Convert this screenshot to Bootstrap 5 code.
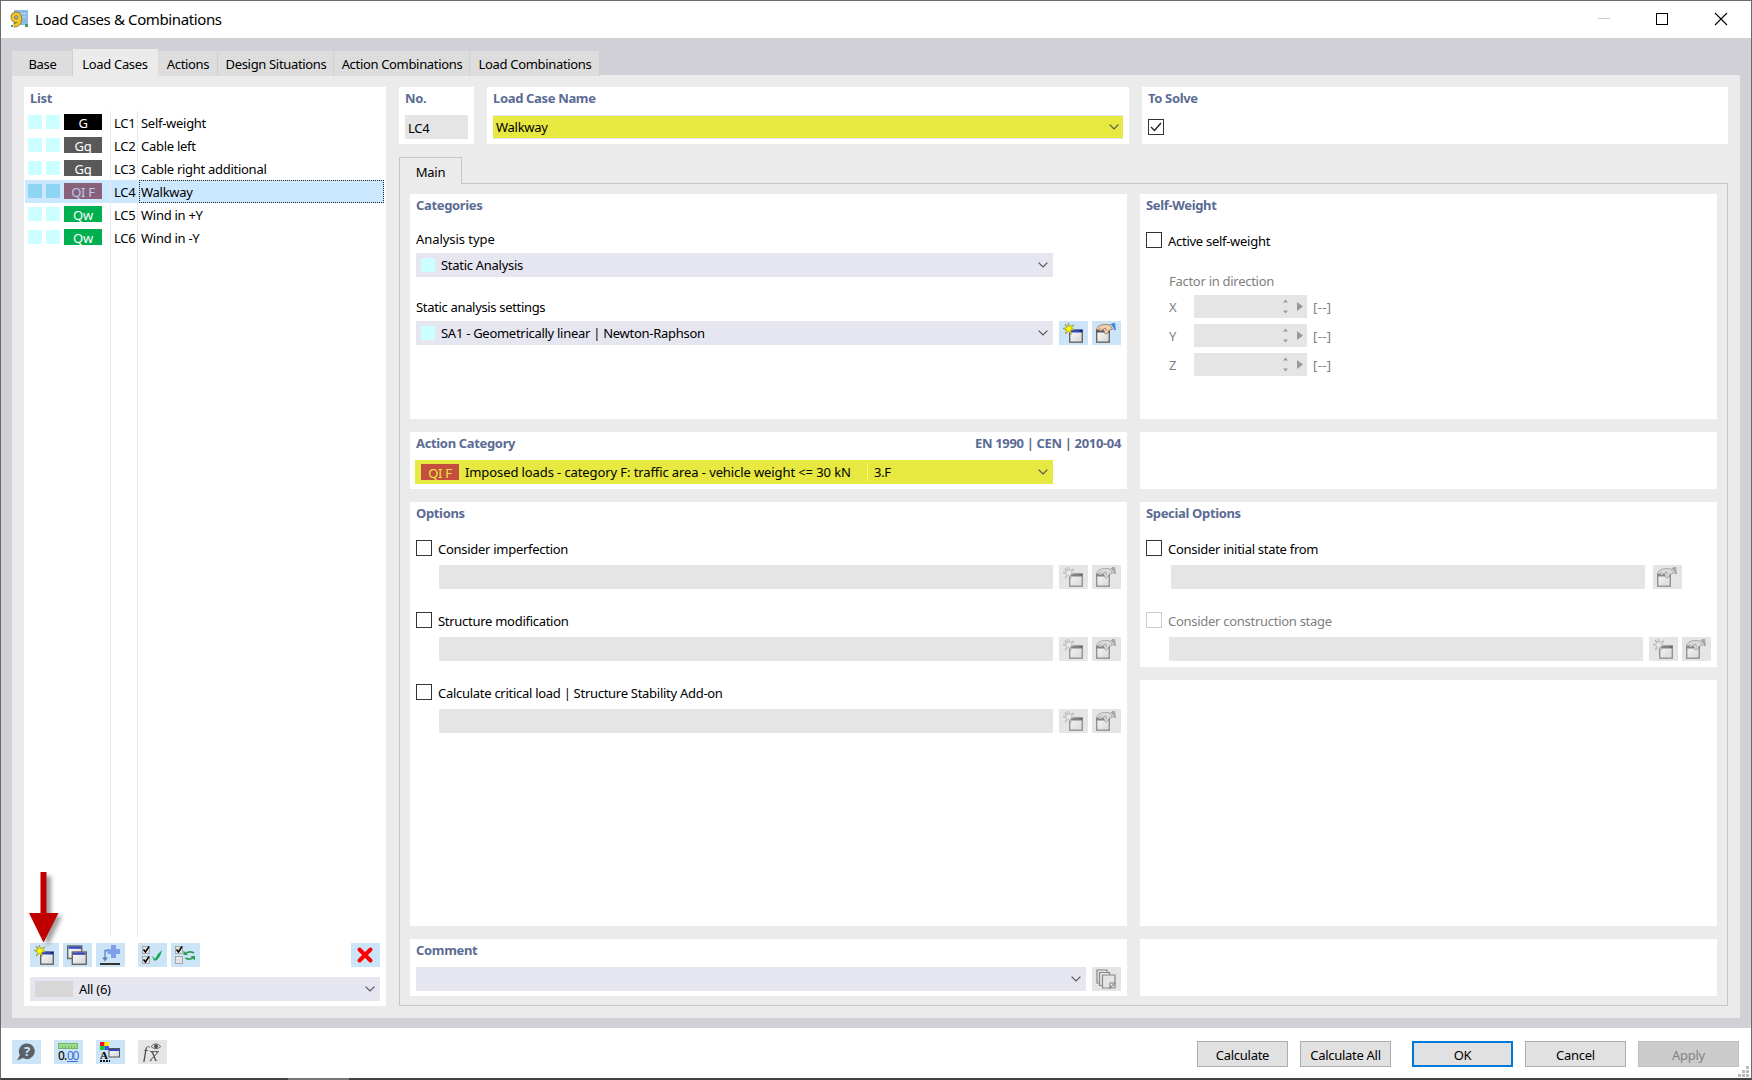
<!DOCTYPE html>
<html lang="en">
<head>
  <meta charset="UTF-8" />
  <title>Load Cases &amp; Combinations</title>
  <link href="https://cdn.jsdelivr.net/npm/bootstrap@5.3.0/dist/css/bootstrap.min.css" rel="stylesheet" />
  <style>
    body { width: 1752px; height: 1080px; overflow: hidden; font: 13px/16px "Noto Sans", sans-serif; letter-spacing: -.28px; color: #000; background: #fff; }
    .window { width: 1752px; height: 1080px; border: 1px solid #6b6b6d; border-bottom: 2px solid #404042; }
    .titlebar { height: 37px; padding: 0 0 1px 9px; font-size: 15px; }
    .caption-text { margin: -1px 0 0 6px; letter-spacing: -.38px; }
    .window-body { height: 990px; background: #d0d0d6; padding: 8px 11px 10px; }

    .main-tabs { height: 25px; }
    .main-tabs .nav-link { height: 25px; margin-top: 1px; background: #ddd; color: #000; border-right: 1px solid #d0d0d2; border-radius: 0; padding: 5px 0 0 1px; text-align: center; white-space: nowrap; letter-spacing: -.33px; }
    .main-tabs .nav-link.active { height: 27px; margin-top: -1px; padding: 7px 1px 0 0; background: #ebebeb; border: 0; }
    .page-area { height: 943px; background: #ebebeb; padding: 12px; }

    .panel { background: #fff; }
    .pp { padding: 3px 6px 0; }
    .head { color: #5b6b93; font-weight: 700; letter-spacing: -.34px; }

    /* list of load cases */
    .list-panel { width: 362px; flex: none; margin-right: 13px; padding-top: 3px; }
    .list-rows { height: 826px; margin-top: 5px; }
    .lc { height: 23px; padding-left: 3px; margin: 0 1px; width: 359px; }
    .lc .sw { width: 14px; height: 14px; background: #ccffff; margin: 4px 4px 0 0; }
    .lc-tag { width: 38px; height: 16px; margin-top: 3px; color: #fff; text-align: center; line-height: 18px; }
    .lc .num { width: 28px; margin-left: 8px; padding-left: 3px; border: solid #e8e8ea; border-width: 0 1px; height: 23px; line-height: 25px; white-space: nowrap; }
    .lc .nm { flex: 1; height: 23px; margin-left: 1px; padding-left: 1px; border: 1px dotted transparent; line-height: 23px; }
    .lc.selected { background: #cce8ff; }
    .lc.selected .sw { background: #8dd5f3; }
    .lc.selected .nm { border-color: #222; }
    .lc.selected .lc-tag { background: #89607a; color: #b4cdea; }
    .rule { width: 28px; margin-left: 86px; border: solid #e8e8ea; border-width: 0 1px; }
    .list-head { padding-left: 6px; }
    .list-tools { gap: 4px; margin: 6px 6px 0; }
    .list-tools .ib:nth-child(4) { margin-left: 9px; }
    .list-filter { margin: 10px 6px 0; }
    .filter-swatch { width: 38px; height: 16px; background: #d7d7d7; margin-right: 6px; }

    /* fields */
    .ib { width: 29px; height: 24px; background: #cce4f7; flex: none; display: flex; align-items: center; padding-left: 4px; }
    .ib svg { overflow: visible; }
    .ib.off { background: #e5e5e5; }
    .ib.off svg { filter: grayscale(1) opacity(.65); }
    .b1 { margin-left: 6px; }
    .b2 { margin-left: 4px; }
    .b3 { margin-left: 8px; }
    .combo { height: 24px; background: #e6e6f1; padding: 0 5px; line-height: 24px; white-space: nowrap; }
    .combo .chev { margin-left: auto; flex: none; }
    .w637 { width: 637px; }
    .swatch { width: 14px; height: 14px; background: #ccffff; margin-right: 6px; }
    .yellow { background: #e7e840; }
    .dis { height: 24px; background: #e5e5e5; }
    .ck { width: 16px; height: 16px; border: 1px solid #333; background: #fff; margin-right: 6px; flex: none; }
    .ck.off { border-color: #ccc; }
    .ck-text { line-height: 18px; }
    .grey { color: #808080; }

    /* top line */
    .top-line { height: 57px; }
    .no-panel { width: 75px; margin-right: 13px; }
    .name-panel { width: 642px; margin-right: 13px; }
    .solve-panel { width: 586px; }
    .lcno { width: 63px; margin-top: 9px; padding-left: 3px; line-height: 27px; }
    .name-combo { margin-top: 9px; border: solid #e6e6f1; border-width: 1px 0; padding: 0 4px 0 3px; line-height: 22px; }
    .solve-ck { margin-top: 13px; }

    /* main tab */
    .sub-tab { width: 63px; height: 27px; border: 1px solid #c4c4cf; border-bottom: 0; margin: 13px 0 -1px; background: #ebebeb; text-align: center; line-height: 29px; position: relative; }
    .sub-frame { width: 1329px; height: 823px; border: 1px solid #c4c4cf; padding: 10px 10px 9px; }
    .col-l { width: 717px; margin-right: 13px; }
    .col-r { width: 577px; }
    .h-cat { height: 225px; margin-bottom: 13px; }
    .h-act { height: 57px; margin-bottom: 13px; }
    .h-opt { height: 424px; margin-bottom: 13px; }
    .h-com { height: 57px; }
    .h-spec { height: 165px; margin-bottom: 13px; }
    .h-blank { height: 246px; margin-bottom: 13px; }
    .lab1 { height: 16px; margin: 18px 0 6px; letter-spacing: -.05px; }
    .lab2 { height: 16px; margin: 22px 0 6px; letter-spacing: -.33px; }
    .act-combo { margin: 9px 0 0 -1px; width: 638px; padding-left: 6px; }
    .act-tag { width: 38px; height: 16px; line-height: 18px; background: #c44e3f; color: #e7e840; text-align: center; margin-right: 6px; }
    .act-name { width: 403px; height: 18px; line-height: 18px; border-right: 1px solid #fbfb70; margin-right: 6px; letter-spacing: -.1px; }
    .opt { height: 72px; }
    .opt-first { margin-top: 19px; }
    .opt-line { margin-top: 7px; }
    .opt .dis { margin-left: 23px; width: 614px; }
    .opt .init-bar { margin-left: 25px; width: 474px; }
    .opt .stage-bar { width: 474px; }
    .sw-ck { margin-top: 19px; }
    .sw-fac { margin: 23px 0 6px 23px; }
    .spin-row { height: 29px; margin-left: 23px; }
    .spin-row .axis { width: 25px; line-height: 25px; }
    .spin-row .unit { margin-left: 6px; line-height: 25px; letter-spacing: .4px; }
    .spin { width: 113px; height: 23px; background: #e5e5e5; padding-right: 4px; }
    .com-line { margin-top: 9px; }

    .foot { height: 50px; padding: 12px 12px 0 11px; }
    .f2 { margin-left: 13px; }
    .pbtn { width: 91px; height: 26px; margin-top: 1px; background: #e1e1e1; border: 1px solid #adadad; border-radius: 0; padding: 0; font-size: 13px; line-height: 27px; letter-spacing: -.28px; color: #000; }
    .pbtn.gap-l { margin-left: 12px; }
    .pbtn.wide { width: 101px; margin-left: 12px; }
    .pbtn.ok { border: 2px solid #0078d7; line-height: 25px; margin-left: 21px; }
    .pbtn.gone { background: #ccc; border-color: #bfbfbf; color: #838383; }
    .pointer { position: absolute; left: 26px; top: 870px; }
    .grip { position: absolute; left: 1738px; top: 1066px; }
    .taskseg { position: absolute; left: 288px; top: 1078px; width: 61px; height: 2px; background: #777; }
  </style>
</head>
<body>
  <svg width="0" height="0" class="position-absolute">
    <defs>
      <linearGradient id="win" x1="0" y1="0" x2="1" y2="1"><stop offset="0" stop-color="#fff" /><stop offset="1" stop-color="#d2d2d2" /></linearGradient>
      <symbol id="star" viewBox="0 0 12 12"><path d="M5.5 0l1 3.6L11 2 8.200 5.200l3.500 1.600-4 .4.5 4.300L5.600 8.200 2.300 11l1.500-4L0 5.500l3.900-.8L2 1.200l2.700 2.400z" fill="#ff0" stroke="#8f8a35" stroke-width=".7" /></symbol>
      <symbol id="i-new" viewBox="0 0 20 20">
        <rect x="6.7" y="7.200" width="12.600" height="12" fill="url(#win)" stroke="#666" stroke-width="1.400" />
        <path d="M6 6.500h14v3H6z" fill="#3347b8" /><path d="M16.500 8H19" stroke="#222" stroke-width="1.500" />
        <use href="#star" x="0" y="0" width="12" height="12" />
      </symbol>
      <symbol id="i-edit" viewBox="0 0 20 20">
        <rect x=".7" y="7.200" width="12.600" height="12" fill="url(#win)" stroke="#666" stroke-width="1.400" />
        <path d="M0 6.500h14v3H0z" fill="#555" />
        <path d="M14 2l2.500-2H19l1 7h-3z" fill="#4b8ddb" /><path d="M14.500 2l3 4.500" stroke="#fff" stroke-width="1.200" />
        <path d="M.5 6Q2 2.500 6 1.800q4-.8 8 .2l2.500 4-3.500 1.500-2 3.300H9L8 8 7 6.500 5 8H3.500l-.3-1.500-1.500.8z" fill="#f2cfae" stroke="#7d6552" stroke-width=".7" />
        <path d="M3.200 6.500L5 5M6.800 6.500L9.500 5l1 3" fill="none" stroke="#7d6552" stroke-width=".7" />
      </symbol>
      <symbol id="i-copy" viewBox="0 0 20 20">
        <rect x=".7" y="1" width="14" height="12.500" fill="url(#win)" stroke="#666" stroke-width="1.400" /><path d="M1.500 1.500H14v2.300H1.500z" fill="#3347b8" />
        <rect x="5.300" y="7" width="14" height="12.300" fill="url(#win)" stroke="#666" stroke-width="1.400" /><path d="M6 7.500h12.500v2.300H6z" fill="#3347b8" />
      </symbol>
      <symbol id="i-add" viewBox="0 0 20 20">
        <path d="M11 0h5v4h4v5h-4v4h-5V9H7.500V4H11z" fill="#7f9fec" />
        <path d="M8 5.500H5V14" fill="none" stroke="#5c83bd" stroke-width="1.300" /><path d="M2 12.500h6l-3 4z" fill="#5c83bd" />
        <path d="M0 19h20" stroke="#333" stroke-width="2" />
      </symbol>
      <symbol id="i-box" viewBox="0 0 8 8"><rect x=".5" y=".5" width="7" height="7" fill="#e3e3e3" stroke="#999" stroke-width=".8" /></symbol>
      <symbol id="i-ckd" viewBox="0 0 8 8"><rect x=".5" y=".5" width="7" height="7" fill="#e3e3e3" stroke="#999" stroke-width=".8" /><path d="M1.500 3.500L3.500 6 7 .5" fill="none" stroke="#000" stroke-width="1.500" /></symbol>
      <symbol id="i-all" viewBox="0 0 20 20">
        <use href="#i-ckd" x="0" y="1" width="8" height="8" /><use href="#i-ckd" x="0" y="11" width="8" height="8" />
        <path d="M9.500 11q2.500 1 3.500 3 2-5 7-9-2 8-6 10.500h-2q-.5-2.500-2.500-4.500z" fill="#16a650" />
      </symbol>
      <symbol id="i-inv" viewBox="0 0 20 20">
        <use href="#i-ckd" x="0" y="1" width="8" height="8" /><use href="#i-box" x="0" y="11" width="8" height="8" />
        <path d="M10.500 8.500q4-3 8.500-.5M18.500 12.500q-4 3-8 .5" fill="none" stroke="#2f9e50" stroke-width="1.800" /><path d="M8.500 5.500V10H13zM20 15.500V11h-4.500z" fill="#2f9e50" />
      </symbol>
      <symbol id="i-del" viewBox="0 0 20 20"><path d="M4.500 4.500l11 11M15.500 4.500l-11 11" stroke="#f00" stroke-width="4" stroke-linecap="round" /></symbol>
      <symbol id="i-cmt" viewBox="0 0 20 20">
        <path d="M1 1h10v13H1z" fill="#e5e5e5" stroke="#555" stroke-width="1.200" />
        <path d="M3.500 3.500h10v13h-10z" fill="#e5e5e5" stroke="#555" stroke-width="1.200" />
        <path d="M6.500 6H19v13H6.500z" fill="#e5e5e5" stroke="#555" stroke-width="1.200" /><path d="M14 19v-5h5z" fill="#fff" stroke="#555" stroke-width="1.200" />
      </symbol>
      <symbol id="i-chev" viewBox="0 0 10 6"><path d="M.6.6L5 5 9.400.6" fill="none" stroke="#555" stroke-width="1.200" /></symbol>
      <symbol id="i-spin" viewBox="0 0 20 15"><path d="M0 3.500L2.500.5l2.500 3zM0 11.500l2.500 3 2.500-3zM14 3v9l6-4.500z" fill="#999" /></symbol>
    </defs>
  </svg>

  <div class="window">
    <header class="titlebar d-flex align-items-center">
      <svg width="19" height="20" viewBox="0 0 19 20">
        <path d="M4 1h14v15H4z" fill="#8bbbe4" /><path d="M9 4.500h7M12 8h4" stroke="#bcdaf2" /><path d="M1 16h2v2H1zM15 15h3v3h-3z" fill="#3d9b6c" />
        <g fill="none" stroke="#8c7425" stroke-width="4.400"><circle cx="6.200" cy="8.300" r="3.500" /><path d="M9.700 8.300v2.500q0 5-6 5.700" /></g>
        <g fill="none" stroke="#f0c52d" stroke-width="2.800"><circle cx="6.200" cy="8.300" r="3.500" /><path d="M9.700 8.300v2.500q0 5-5.500 5.700" /></g>
      </svg>
      <span class="caption-text">Load Cases &amp; Combinations</span>
      <svg class="ms-auto" width="153" height="20" viewBox="0 0 153 20" fill="none">
        <path d="M0 9.500h12" stroke="#ccc" /><rect x="58.5" y="4.500" width="11" height="11" stroke="#000" /><path d="M117 4l12 12M129 4l-12 12" stroke="#000" stroke-width="1.100" />
      </svg>
    </header>

    <div class="window-body">
      <nav class="nav main-tabs flex-nowrap mt-1">
        <a class="nav-link" style="width:61px">Base</a>
        <a class="nav-link active" style="width:85px">Load Cases</a>
        <a class="nav-link" style="width:60px">Actions</a>
        <a class="nav-link" style="width:116px">Design Situations</a>
        <a class="nav-link" style="width:136px">Action Combinations</a>
        <a class="nav-link" style="width:130px">Load Combinations</a>
      </nav>

      <div class="page-area d-flex">
        <section class="panel list-panel">
          <div class="head list-head">List</div>
          <div class="list-rows d-flex flex-column">
            <div id="lcRows"></div>
            <div class="rule flex-grow-1"></div>
          </div>
          <div class="d-flex list-tools">
            <span class="ib"><svg width="20" height="20"><use href="#i-new" /></svg></span>
            <span class="ib"><svg width="20" height="20"><use href="#i-copy" /></svg></span>
            <span class="ib"><svg width="20" height="20"><use href="#i-add" /></svg></span>
            <span class="ib"><svg width="20" height="20"><use href="#i-all" /></svg></span>
            <span class="ib"><svg width="20" height="20"><use href="#i-inv" /></svg></span>
            <span class="ib ms-auto"><svg width="20" height="20"><use href="#i-del" /></svg></span>
          </div>
          <div class="combo d-flex align-items-center list-filter">
            <span class="filter-swatch"></span>All (6)<svg class="chev" width="10" height="6"><use href="#i-chev" /></svg>
          </div>
        </section>

        <div>
          <div class="d-flex top-line">
            <section class="panel pp no-panel"><div class="head">No.</div><div class="dis lcno">LC4</div></section>
            <section class="panel pp name-panel"><div class="head">Load Case Name</div>
              <div class="combo yellow name-combo d-flex align-items-center">Walkway<svg class="chev" width="10" height="6"><use href="#i-chev" /></svg></div>
            </section>
            <section class="panel pp solve-panel"><div class="head">To Solve</div>
              <div class="ck solve-ck"><svg class="d-block" width="14" height="14" viewBox="0 0 14 14"><path d="M2 7l3.500 3.500L12 3" fill="none" stroke="#222" stroke-width="1.400" /></svg></div>
            </section>
          </div>

          <div class="sub-tab">Main</div>
          <div class="sub-frame d-flex">
            <div class="col-l d-flex flex-column">
              <section class="panel pp h-cat">
                <div class="head">Categories</div>
                <div class="lab1">Analysis type</div>
                <div class="combo w637 d-flex align-items-center"><span class="swatch"></span>Static Analysis<svg class="chev" width="10" height="6"><use href="#i-chev" /></svg></div>
                <div class="lab2">Static analysis settings</div>
                <div class="d-flex">
                  <div class="combo w637 d-flex align-items-center"><span class="swatch"></span>SA1 - Geometrically linear | Newton-Raphson<svg class="chev" width="10" height="6"><use href="#i-chev" /></svg></div>
                  <span class="ib b1"><svg width="20" height="20"><use href="#i-new" /></svg></span>
                  <span class="ib b2"><svg width="20" height="20"><use href="#i-edit" /></svg></span>
                </div>
              </section>
              <section class="panel pp h-act">
                <div class="head d-flex justify-content-between"><span>Action Category</span><span>EN 1990 | CEN | 2010-04</span></div>
                <div class="combo yellow act-combo d-flex align-items-center"><span class="act-tag">QI F</span><span class="act-name">Imposed loads - category F: traffic area - vehicle weight &lt;= 30 kN</span><span>3.F</span><svg class="chev" width="10" height="6"><use href="#i-chev" /></svg></div>
              </section>
              <section class="panel pp h-opt">
                <div class="head">Options</div>
                <div id="optRows"></div>
              </section>
              <section class="panel pp h-com">
                <div class="head">Comment</div>
                <div class="d-flex com-line">
                  <div class="combo flex-grow-1 d-flex align-items-center"><svg class="chev" width="10" height="6"><use href="#i-chev" /></svg></div>
                  <span class="ib off b1"><svg width="20" height="20"><use href="#i-cmt" /></svg></span>
                </div>
              </section>
            </div>

            <div class="col-r d-flex flex-column">
              <section class="panel pp h-cat">
                <div class="head">Self-Weight</div>
                <div class="d-flex sw-ck"><span class="ck"></span><span class="ck-text">Active self-weight</span></div>
                <div class="grey sw-fac">Factor in direction</div>
                <div id="spinRows"></div>
              </section>
              <section class="panel h-act"></section>
              <section class="panel pp h-spec">
                <div class="head">Special Options</div>
                <div class="opt opt-first">
                  <div class="d-flex"><span class="ck"></span><span class="ck-text">Consider initial state from</span></div>
                  <div class="d-flex opt-line"><div class="dis init-bar"></div><span class="ib off b3"><svg width="20" height="20"><use href="#i-edit" /></svg></span></div>
                </div>
                <div class="opt">
                  <div class="d-flex grey"><span class="ck off"></span><span class="ck-text">Consider construction stage</span></div>
                  <div class="d-flex opt-line"><div class="dis stage-bar"></div>
                    <span class="ib off b1"><svg width="20" height="20"><use href="#i-new" /></svg></span>
                    <span class="ib off b2"><svg width="20" height="20"><use href="#i-edit" /></svg></span>
                  </div>
                </div>
              </section>
              <section class="panel h-blank"></section>
              <section class="panel h-com"></section>
            </div>
          </div>
        </div>
      </div>
    </div>

    <footer class="foot d-flex">
      <span class="ib"><svg width="20" height="20" viewBox="0 0 20 20"><path d="M11 1.500a7.800 7.800 0 1 1-4 14.500L1 18.500 3.800 13A7.800 7.800 0 0 1 11 1.500z" fill="#5c6166" /><text x="11" y="14" font-size="13" font-weight="700" text-anchor="middle" fill="#cce4f7">?</text></svg></span>
      <span class="ib f2"><svg width="22" height="20" viewBox="0 0 22 20"><rect x=".5" y="1.500" width="19" height="5" fill="#9bdc8a" stroke="#71b565" /><path d="M4.500 4v2M7.500 4v2M10.500 4v2M13.500 4v2M16.500 4v2" stroke="#71b565" /><text x="0" y="18" font-size="12" font-weight="500" fill="#111" textLength="9">0.</text><text x="9" y="18" font-size="12" fill="#3b6fd0" textLength="12">00</text><path d="M9 19.500h11" stroke="#3b6fd0" /></svg></span>
      <span class="ib f2"><svg width="20" height="20" viewBox="0 0 20 20"><path d="M0 0h4.500v4H0z" fill="#e11" /><path d="M4.500 0H9v4H4.500z" fill="#fe0" /><path d="M0 4h4.500v4H0z" fill="#1c3" /><path d="M4.500 4H9v4H4.500z" fill="#45e" /><text x="0" y="17" font-size="11" font-weight="700" font-family="Liberation Serif">A</text><path d="M0 19h10" stroke="#111" stroke-width="2" stroke-dasharray="2 1" /><rect x="9" y="6.500" width="10.500" height="8.500" fill="url(#win)" stroke="#555" /><path d="M9 7h10.500v2H9z" fill="#3347b8" /></svg></span>
      <span class="ib off f2"><svg width="20" height="20" viewBox="0 0 20 20"><text x="1" y="15.500" font-size="17" font-style="italic" font-family="Liberation Serif">f</text><text x="8" y="18.500" font-size="18" font-style="italic" font-family="Liberation Serif">x</text><path d="M9 4.500q4.800-5.500 9.800 0-5 4.500-9.800 0M8 9.500h9" fill="none" stroke="#222" /><circle cx="14" cy="4.200" r="2" /></svg></span>
      <button class="btn pbtn ms-auto">Calculate</button>
      <button class="btn pbtn gap-l">Calculate All</button>
      <button class="btn pbtn wide ok">OK</button>
      <button class="btn pbtn wide">Cancel</button>
      <button class="btn pbtn wide gone">Apply</button>
    </footer>
  </div>

  <svg class="pointer" width="42" height="80" viewBox="0 0 42 80">
    <defs><filter id="soft"><feGaussianBlur stdDeviation="2" /></filter></defs>
    <path d="M18 6h7v40h11L22 76 8 46h10z" fill="#777" opacity=".7" filter="url(#soft)" />
    <path d="M14.500 2h6v41H32.500L17.500 72.500 3 43h11.500z" fill="#c00000" />
  </svg>
  <svg class="grip" width="12" height="12" viewBox="0 0 12 12" fill="#bbb"><path d="M8 0h3v3H8zM4 4h3v3H4zM8 4h3v3H8zM0 8h3v3H0zM4 8h3v3H4zM8 8h3v3H8z" /></svg>
  <div class="taskseg"></div>

  <script src="https://cdn.jsdelivr.net/npm/bootstrap@5.3.0/dist/js/bootstrap.bundle.min.js"></script>
  <script>
    const lcs = [
      ["LC1", "Self-weight", "G", "#000"],
      ["LC2", "Cable left", "Gq", "#595959"],
      ["LC3", "Cable right additional", "Gq", "#595959"],
      ["LC4", "Walkway", "QI F", ""],
      ["LC5", "Wind in +Y", "Qw", "#00b050"],
      ["LC6", "Wind in -Y", "Qw", "#00b050"]
    ];
    document.getElementById("lcRows").innerHTML = lcs.map(r => `
      <div class="lc d-flex ${r[0] === "LC4" ? "selected" : ""}">
        <span class="sw"></span><span class="sw"></span>
        <span class="lc-tag" style="background:${r[3]}">${r[2]}</span>
        <span class="num">${r[0]}</span><span class="nm">${r[1]}</span>
      </div>`).join("");

    const opts = ["Consider imperfection", "Structure modification", "Calculate critical load | Structure Stability Add-on"];
    document.getElementById("optRows").innerHTML = opts.map((t, i) => `
      <div class="opt ${i === 0 ? "opt-first" : ""}">
        <div class="d-flex"><span class="ck"></span><span class="ck-text">${t}</span></div>
        <div class="d-flex opt-line"><div class="dis"></div>
          <span class="ib off b1"><svg width="20" height="20"><use href="#i-new" /></svg></span>
          <span class="ib off b2"><svg width="20" height="20"><use href="#i-edit" /></svg></span>
        </div>
      </div>`).join("");

    document.getElementById("spinRows").innerHTML = ["X", "Y", "Z"].map(a => `
      <div class="spin-row grey d-flex"><span class="axis">${a}</span>
        <div class="spin d-flex align-items-center justify-content-end"><svg width="20" height="15"><use href="#i-spin" /></svg></div>
        <span class="unit">[--]</span></div>`).join("");
  </script>
</body>
</html>
